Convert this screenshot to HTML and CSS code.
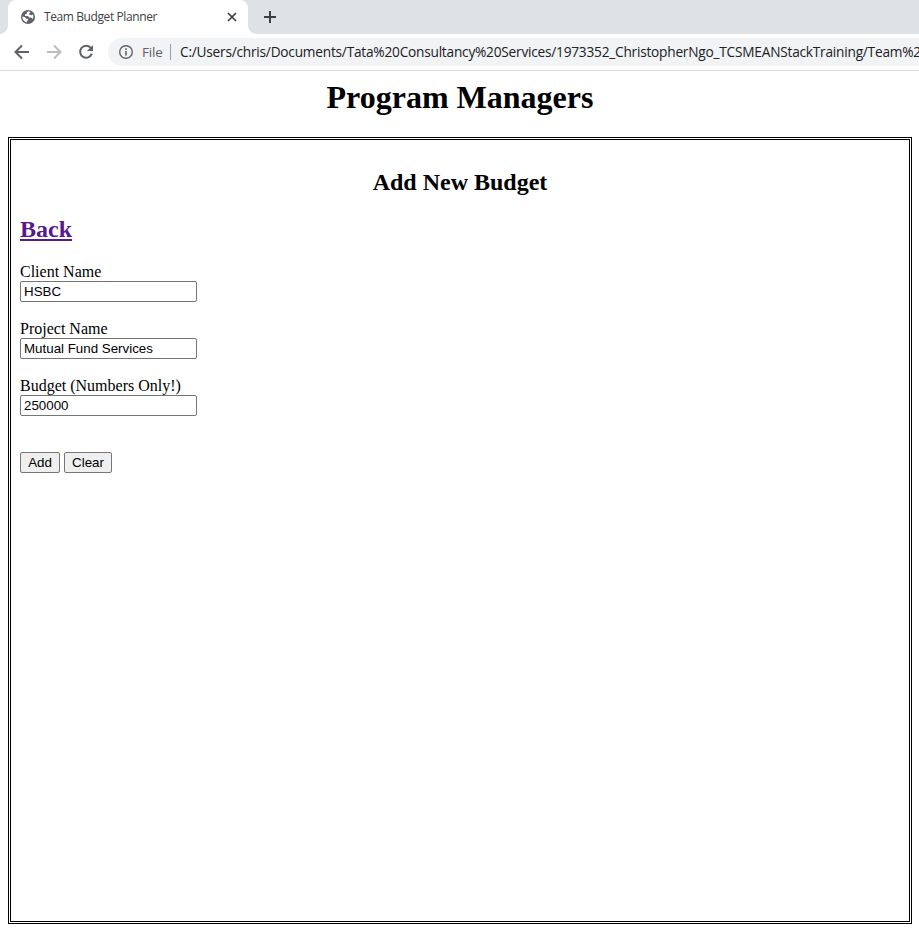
FILE: index.html
```html
<!DOCTYPE html>
<html lang="en">
<head>
<meta charset="utf-8">
<title>Team Budget Planner</title>
<link rel="stylesheet" href="styles.css">
</head>
<body>
<div class="tabstrip">
  <div class="tab">
    <svg class="globe" width="16" height="16" viewBox="0 0 16 16"><circle cx="8" cy="8" r="7" fill="#5f6368"/><path d="M8.600 2.300C7 2.800 6.600 3.700 6.900 4.700L5.200 5.300 5 6.900H7.500C8.500 7 8.900 7.700 8.900 8.600H10.900C11.800 8.800 12.200 9.300 12.400 10.200 13.500 8.700 13.600 6.900 12.900 5.500L11.400 6.200 9.500 5.700 9.200 4.300 10.600 3ZM2.300 7.600C2.200 10.300 4 12.900 6.900 13.600V12L8.100 11.200V9.700H5.900L5.200 8.200Z" fill="#fff"/></svg>
    <span class="tab-title">Team Budget Planner</span>
    <svg class="close" width="10" height="10" viewBox="0 0 10 10"><path d="M1 1L9 9M9 1L1 9" stroke="#3c4043" stroke-width="1.700"/></svg>
  </div>
  <svg class="plus" width="12" height="12" viewBox="0 0 12 12"><path d="M6 0V12M0 6H12" stroke="#3c4043" stroke-width="2"/></svg>
</div>
<div class="toolbar">
  <svg width="16" height="16" viewBox="0 0 16 16"><path d="M15 8H2.200M8 1.500L1.500 8 8 14.500" fill="none" stroke="#5f6368" stroke-width="2"/></svg>
  <svg width="16" height="16" viewBox="0 0 16 16"><path d="M1 8H13.800M8 1.500L14.500 8 8 14.500" fill="none" stroke="#babcbe" stroke-width="2"/></svg>
  <svg width="16" height="16" viewBox="0 0 16 16"><path d="M12.700 3.800A6 6 0 1 0 13.800 9.700" fill="none" stroke="#5f6368" stroke-width="2"/><path d="M15 1V7H9Z" fill="#5f6368"/></svg>
  <div class="address">
    <svg width="14" height="14" viewBox="0 0 14 14"><circle cx="7" cy="7" r="6.300" fill="none" stroke="#5f6368" stroke-width="1.400"/><path d="M7 6V10.500M7 3.300V4.900" stroke="#5f6368" stroke-width="1.600"/></svg>
    <span class="scheme">File</span>
    <span class="divider"></span>
    <span class="url">C:/Users/chris/Documents/Tata%20Consultancy%20Services/1973352_ChristopherNgo_TCSMEANStackTraining/Team%20</span>
  </div>
</div>
<main>
  <h1>Program Managers</h1>
  <section class="panel">
    <h2>Add New Budget</h2>
    <h2 class="back"><a href="#">Back</a></h2>
    <form>
      <label for="client">Client Name</label>
      <input id="client" type="text" value="HSBC">
      <label for="project">Project Name</label>
      <input id="project" type="text" value="Mutual Fund Services">
      <label for="budget">Budget (Numbers Only!)</label>
      <input id="budget" type="text" value="250000">
      <div class="actions"><button type="button">Add</button><button type="reset">Clear</button></div>
    </form>
  </section>
</main>
</body>
</html>
```
FILE: styles.css
```css
* { box-sizing: border-box; }
html, body { height: 100%; overflow: hidden; }
body {
  margin: 0;
  background: #fff;
  color: #000;
  font: 16px/18px "Liberation Serif", serif;
}
svg { display: block; flex: none; }
.tabstrip {
  display: flex;
  align-items: center;
  height: 34px;
  padding-left: 8px;
  background: #dee1e6;
  font-family: "Open Sans", sans-serif;
}
.tab {
  position: relative;
  display: flex;
  align-items: center;
  width: 240px;
  height: 34px;
  padding: 0 11px 0 12px;
  background: #fff;
  border-radius: 8px 8px 0 0;
}
.tab::before, .tab::after {
  content: "";
  position: absolute;
  bottom: 0;
  width: 8px;
  height: 8px;
}
.tab::before { left: -8px; background: radial-gradient(circle at 0 0, transparent 7.5px, #fff 8px); }
.tab::after { right: -8px; background: radial-gradient(circle at 100% 0, transparent 7.5px, #fff 8px); }
.tab-title {
  flex: 1;
  margin-left: 8px;
  font-size: 12px;
  letter-spacing: -0.4px;
  color: #3c4043;
  white-space: nowrap;
}
.plus { margin-left: 16px; }
.toolbar {
  display: flex;
  align-items: center;
  gap: 16px;
  height: 37px;
  padding-left: 14px;
  border-bottom: 1px solid #dadce0;
  overflow: hidden;
}
.address {
  display: flex;
  align-items: center;
  flex: none;
  width: 813px;
  height: 28px;
  margin-left: -2px;
  padding-left: 11px;
  border-radius: 14px 0 0 14px;
  background: #f1f3f4;
  font-family: "Open Sans", sans-serif;
  overflow: hidden;
  white-space: nowrap;
}
.scheme { width: 20px; margin-left: 9px; color: #5f6368; font-size: 13.5px; letter-spacing: -0.2px; }
.divider { flex: none; width: 1px; height: 16px; margin: 0 9px 0 8px; background: #9aa0a6; }
.url { color: #202124; font-size: 13.7px; letter-spacing: -0.23px; }
main { height: 853px; margin: 0 7px 0 8px; padding-top: 8px; }
h1 { margin: 0 0 22px; font-size: 32px; line-height: 36px; text-align: center; }
.panel {
  height: 787px;
  padding: 29px 9px 0;
  border: 3px double #000;
}
h2 { margin: 0; font-size: 24px; line-height: 27px; text-align: center; }
.back { margin: 20px 0 20px; text-align: left; }
a { color: #551a8b; }
form { display: flex; flex-direction: column; align-items: flex-start; }
input {
  width: 177px;
  height: 21px;
  margin: 0 0 18px;
  padding: 1px 3px;
  border: 1px solid #767676;
  border-radius: 2px;
  background: #fff;
  color: #000;
  font: 13.333px "Liberation Sans", Arial, sans-serif;
  outline: 0;
}
.actions { display: flex; gap: 4px; margin-top: 18px; }
button {
  width: 40px;
  height: 21px;
  padding: 0;
  border: 1px solid #767676;
  border-radius: 2px;
  background: #efefef;
  color: #000;
  font: 13.333px "Liberation Sans", Arial, sans-serif;
}
button + button { width: 48px; }
```
